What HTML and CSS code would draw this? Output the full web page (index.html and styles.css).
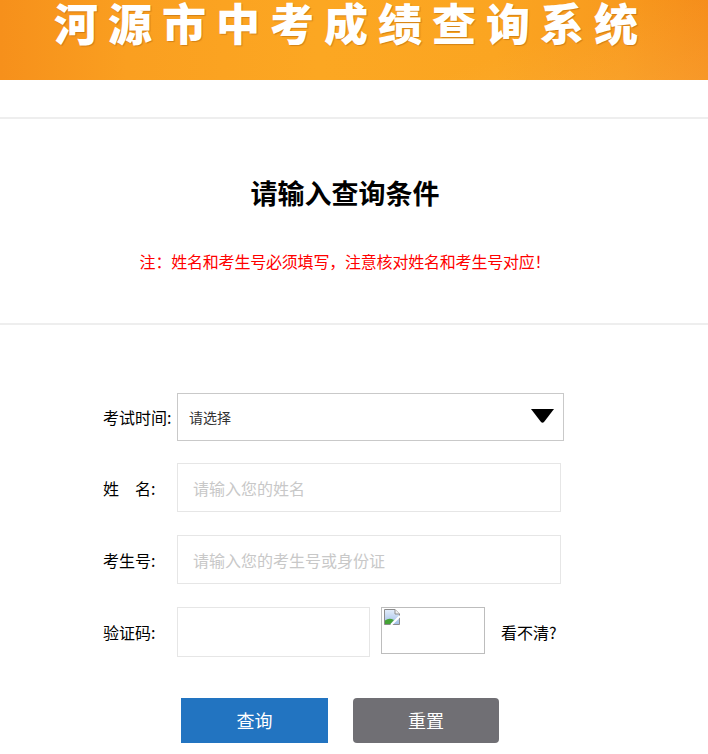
FILE: index.html
```html
<!DOCTYPE html>
<html lang="zh-CN">
<head>
<meta charset="utf-8">
<title>河源市中考成绩查询系统</title>
<link rel="stylesheet" href="styles.css">
</head>
<body>
<header class="banner">
  <h1 class="banner-title">河源市中考成绩查询系统</h1>
</header>

<section class="intro">
  <h2 class="intro-title">请输入查询条件</h2>
  <p class="intro-note">注：姓名和考生号必须填写，注意核对姓名和考生号对应！</p>
</section>

<form class="form">
  <div class="row row-select">
    <label class="label">考试时间:</label>
    <div class="select">
      <span class="select-text">请选择</span>
      <svg class="select-arrow" width="23" height="14" viewBox="0 0 23 14"><path d="M0 0 H23 L13 13 Q11.5 14.6 10 13 Z" fill="#000"/></svg>
    </div>
  </div>
  <div class="row">
    <label class="label">姓　名:</label>
    <input class="input" type="text" placeholder="请输入您的姓名">
  </div>
  <div class="row">
    <label class="label">考生号:</label>
    <input class="input" type="text" placeholder="请输入您的考生号或身份证">
  </div>
  <div class="row row-captcha">
    <label class="label">验证码:</label>
    <input class="input input-captcha" type="text">
    <div class="captcha-img">
      <svg class="broken-icon" width="18" height="18" viewBox="0 0 18 18">
        <defs>
          <linearGradient id="sky" x1="0" y1="0" x2="0" y2="1">
            <stop offset="0" stop-color="#e4eefb"/>
            <stop offset="1" stop-color="#9fbde6"/>
          </linearGradient>
        </defs>
        <path d="M1.5 1.5 H12 L16.5 6 V16.5 H1.5 Z" fill="url(#sky)" stroke="#8c8c8c"/>
        <path d="M12 1.5 V6 H16.5" fill="#f2f2f2" stroke="#8c8c8c"/>
        <path d="M2 16 V12.5 Q6 9.5 11 12 L7.5 16 Z" fill="#45a336"/>
        <path d="M8 17 L17 8" stroke="#fff" stroke-width="2"/>
      </svg>
    </div>
    <span class="refresh">看不清?</span>
  </div>
  <div class="actions">
    <button class="btn btn-primary" type="button">查询</button>
    <button class="btn btn-gray" type="button">重置</button>
  </div>
</form>
</body>
</html>
```

FILE: styles.css
```css
html, body {
  margin: 0;
  padding: 0;
  background: #ffffff;
}

body {
  font-family: "Noto Sans CJK SC", "Noto Sans", sans-serif;
  color: #000;
}

.banner {
  height: 80px;
  overflow: hidden;
  background:
    linear-gradient(160deg, rgba(255,255,255,0) 70%, rgba(255,190,90,0.25) 100%),
    linear-gradient(90deg, #f6901b 0%, #fa9f20 18%, #fca722 45%, #fba521 70%, #f89a1e 88%, #f58b18 100%);
}

.banner-title {
  margin: 0;
  padding-right: 6px;
  font-size: 44px;
  line-height: 44px;
  letter-spacing: 10px;
  font-weight: 900;
  color: #ffffff;
  text-align: center;
  text-shadow: 1px 1px 1px rgba(140, 70, 0, 0.35);
}

.intro {
  margin-top: 37px;
  border-top: 2px solid #eeeeee;
  border-bottom: 2px solid #eeeeee;
  padding: 56px 18px 50px 0;
  text-align: center;
}

.intro-title {
  margin: 0;
  font-size: 27px;
  line-height: 36px;
  font-weight: 700;
  color: #000;
}

.intro-note {
  margin: 38px 0 0;
  font-size: 16px;
  line-height: 24px;
  letter-spacing: -0.2px;
  color: #ff0000;
}

.form {
  padding: 68px 0 0 103px;
}

.row {
  display: flex;
  align-items: center;
  margin-bottom: 23px;
}

.row-select {
  margin-bottom: 22px;
}

.label {
  width: 74px;
  flex-shrink: 0;
  font-size: 16px;
  line-height: 20px;
  color: #000;
  white-space: pre;
}

.select {
  box-sizing: border-box;
  width: 387px;
  height: 48px;
  border: 1px solid #c9c9c9;
  display: flex;
  align-items: center;
  justify-content: space-between;
  padding: 0 9px 0 11px;
  font-size: 14px;
  color: #333;
}

.select-arrow {
  display: block;
  margin-top: -2px;
}

.input {
  box-sizing: border-box;
  width: 384px;
  height: 49px;
  border: 1px solid #e6e6e6;
  padding: 0 15px;
  margin: 0;
  font-family: inherit;
  font-size: 16px;
  color: #333;
  outline: none;
  background: #fff;
}

.input::placeholder {
  color: #c8c8c8;
}

.input-captcha {
  width: 193px;
  height: 50px;
}

.row-captcha {
  margin-bottom: 41px;
}

.captcha-img {
  box-sizing: border-box;
  width: 104px;
  height: 47px;
  margin-left: 11px;
  border: 1px solid #bdbdbd;
  align-self: flex-start;
  padding: 0 0 0 1px;
}

.broken-icon {
  display: block;
}

.refresh {
  margin-left: 16px;
  font-size: 16px;
  color: #000;
}

.actions {
  display: flex;
  gap: 25px;
  padding-left: 78px;
}

.btn {
  height: 45px;
  border: none;
  margin: 0;
  padding: 0;
  font-family: inherit;
  font-size: 18px;
  line-height: 43px;
  color: #ffffff;
  cursor: pointer;
}

.btn-primary {
  width: 147px;
  background: #2274c1;
}

.btn-gray {
  width: 146px;
  background: #706f74;
  border-radius: 4px;
}
```
